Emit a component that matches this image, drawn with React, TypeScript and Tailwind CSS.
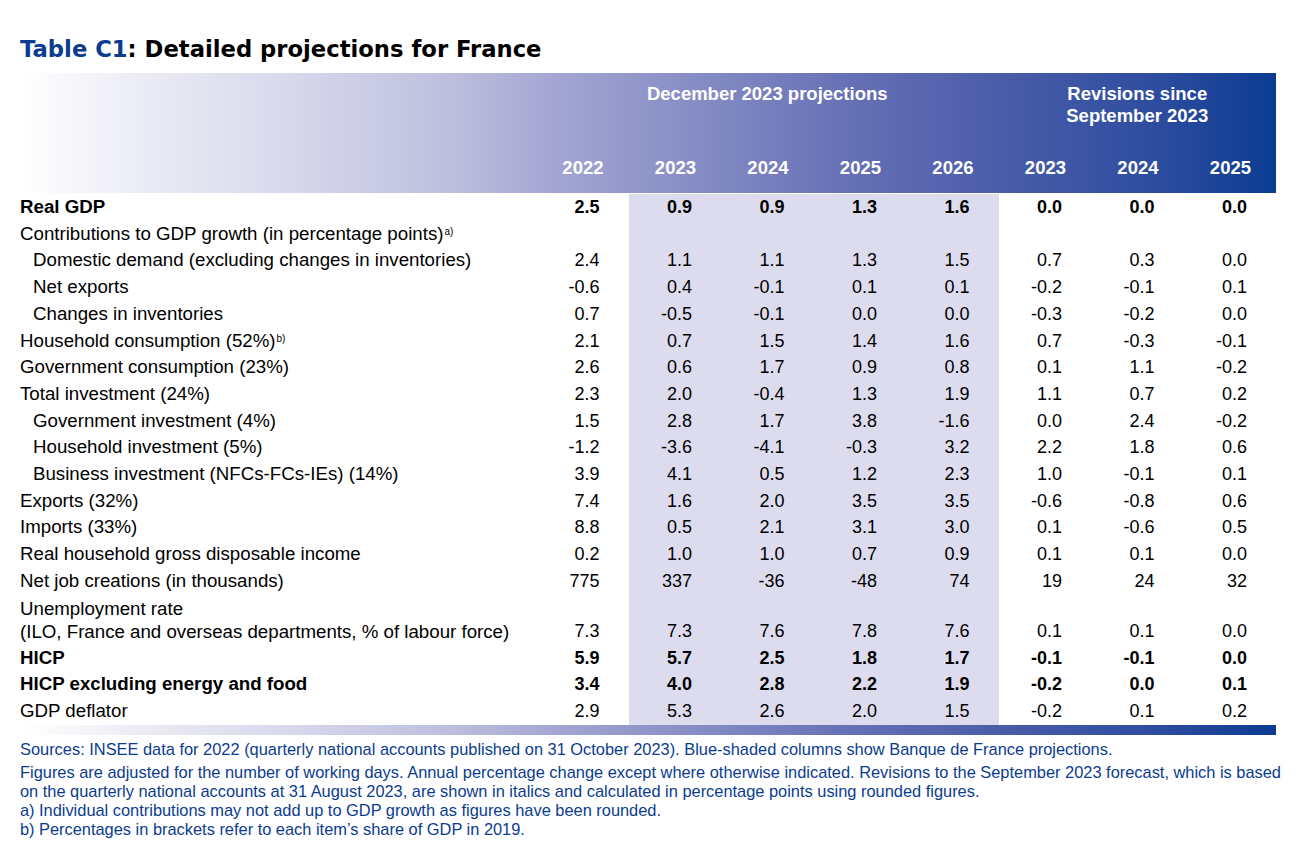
const years = ["2022", "2023", "2024", "2025", "2026", "2023", "2024", "2025"];

type Row = {
  label: string;
  label2?: string;
  sup?: string;
  bold?: boolean;
  indent?: boolean;
  v: string[];
};

const rows: Row[] = [
  { label: "Real GDP", bold: true, v: ["2.5", "0.9", "0.9", "1.3", "1.6", "0.0", "0.0", "0.0"] },
  { label: "Contributions to GDP growth (in percentage points)", sup: "a)", v: [] },
  { label: "Domestic demand (excluding changes in inventories)", indent: true, v: ["2.4", "1.1", "1.1", "1.3", "1.5", "0.7", "0.3", "0.0"] },
  { label: "Net exports", indent: true, v: ["-0.6", "0.4", "-0.1", "0.1", "0.1", "-0.2", "-0.1", "0.1"] },
  { label: "Changes in inventories", indent: true, v: ["0.7", "-0.5", "-0.1", "0.0", "0.0", "-0.3", "-0.2", "0.0"] },
  { label: "Household consumption (52%)", sup: "b)", v: ["2.1", "0.7", "1.5", "1.4", "1.6", "0.7", "-0.3", "-0.1"] },
  { label: "Government consumption (23%)", v: ["2.6", "0.6", "1.7", "0.9", "0.8", "0.1", "1.1", "-0.2"] },
  { label: "Total investment (24%)", v: ["2.3", "2.0", "-0.4", "1.3", "1.9", "1.1", "0.7", "0.2"] },
  { label: "Government investment (4%)", indent: true, v: ["1.5", "2.8", "1.7", "3.8", "-1.6", "0.0", "2.4", "-0.2"] },
  { label: "Household investment (5%)", indent: true, v: ["-1.2", "-3.6", "-4.1", "-0.3", "3.2", "2.2", "1.8", "0.6"] },
  { label: "Business investment (NFCs-FCs-IEs) (14%)", indent: true, v: ["3.9", "4.1", "0.5", "1.2", "2.3", "1.0", "-0.1", "0.1"] },
  { label: "Exports (32%)", v: ["7.4", "1.6", "2.0", "3.5", "3.5", "-0.6", "-0.8", "0.6"] },
  { label: "Imports (33%)", v: ["8.8", "0.5", "2.1", "3.1", "3.0", "0.1", "-0.6", "0.5"] },
  { label: "Real household gross disposable income", v: ["0.2", "1.0", "1.0", "0.7", "0.9", "0.1", "0.1", "0.0"] },
  { label: "Net job creations (in thousands)", v: ["775", "337", "-36", "-48", "74", "19", "24", "32"] },
  {
    label: "Unemployment rate",
    label2: "(ILO, France and overseas departments, % of labour force)",
    v: ["7.3", "7.3", "7.6", "7.8", "7.6", "0.1", "0.1", "0.0"],
  },
  { label: "HICP", bold: true, v: ["5.9", "5.7", "2.5", "1.8", "1.7", "-0.1", "-0.1", "0.0"] },
  { label: "HICP excluding energy and food", bold: true, v: ["3.4", "4.0", "2.8", "2.2", "1.9", "-0.2", "0.0", "0.1"] },
  { label: "GDP deflator", v: ["2.9", "5.3", "2.6", "2.0", "1.5", "-0.2", "0.1", "0.2"] },
];

const gradient =
  "bg-[linear-gradient(90deg,#ffffff_0%,#ebebf5_10%,#d6d7eb_22%,#bebfde_34%,#a2a5d1_43%,#8088c2_56%,#6670b5_66%,#4a5da9_78%,#2f4d9f_90%,#0b3c92_100%)]";

const grid = "grid grid-cols-[516px_repeat(8,92.5px)]";

const App = () => {
  return (
    <div className="w-[1300px] h-[866px] bg-white text-black font-['Liberation_Sans',Arial,sans-serif]">
      <div className="pl-[20px] pt-[36px]">
        <h1 className="font-['DejaVu_Sans',sans-serif] text-[22.7px] leading-[27px] font-bold">
          <span className="text-[#0b3c8f]">Table C1</span>: Detailed projections for France
        </h1>

        <div className="w-[1256px] mt-[10px]">
          {/* header */}
          <div className={`${gradient} h-[120px] flex flex-col justify-between text-white font-bold text-[18.5px] leading-[22px]`}>
            <div className={`${grid} pt-[10px]`}>
              <div />
              <div className="col-span-5 text-center">December 2023 projections</div>
              <div className="col-span-3 text-center">
                Revisions since
                <br />
                September 2023
              </div>
            </div>
            <div className={`${grid} pb-[14px]`}>
              <div />
              {years.map((y, i) => (
                <div key={i} className="text-right pr-[25px]">
                  {y}
                </div>
              ))}
            </div>
          </div>

          {/* body */}
          <div className="pt-[1px]">
            {rows.map((r, ri) => (
              <div key={ri} className={`${grid} ${r.bold ? "font-bold" : ""}`}>
                <div
                  className={`text-[18.7px] ${r.indent ? "pl-[13px]" : ""} ${
                    r.label2 ? "py-[2px] leading-[23px]" : "leading-[26.7px]"
                  }`}
                >
                  {r.label}
                  {r.sup && <sup className="text-[10px] ml-[1px]">{r.sup}</sup>}
                  {r.label2 && (
                    <>
                      <br />
                      {r.label2}
                    </>
                  )}
                </div>
                {years.map((_, ci) => (
                  <div
                    key={ci}
                    className={`flex items-end justify-end pr-[29px] text-[18px] ${ci >= 1 && ci <= 4 ? "bg-[#dcdcee]" : ""} ${
                      r.label2 ? "pb-[2px] leading-[23px]" : "leading-[26.7px]"
                    }`}
                  >
                    {r.v[ci] ?? ""}
                  </div>
                ))}
              </div>
            ))}
          </div>

          <div className={`${gradient} h-[10px]`} />
        </div>

        {/* notes */}
        <div className="mt-[4px] text-[16.4px] leading-[19px] text-[#0b3c8f]">
          <p className="mb-[4px] leading-[20px]">
            Sources: INSEE data for 2022 (quarterly national accounts published on 31 October 2023). Blue-shaded columns show Banque de France projections.
          </p>
          <p>
            Figures are adjusted for the number of working days. Annual percentage change except where otherwise indicated. Revisions to the September 2023 forecast, which is based
          </p>
          <p>
            on the quarterly national accounts at 31 August 2023, are shown in italics and calculated in percentage points using rounded figures.
          </p>
          <p>
            <span className="inline-block w-[19px]">a)</span>Individual contributions may not add up to GDP growth as figures have been rounded.
          </p>
          <p>
            <span className="inline-block w-[19px]">b)</span>Percentages in brackets refer to each item’s share of GDP in 2019.
          </p>
        </div>
      </div>
    </div>
  );
};

export default App;
